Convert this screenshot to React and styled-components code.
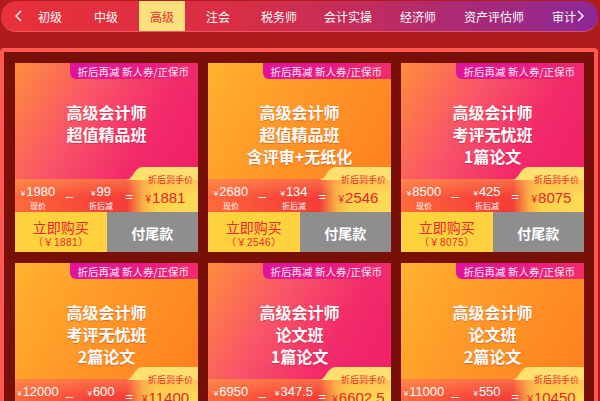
import React from "react";
import styled, { createGlobalStyle, css } from "styled-components";

const GlobalStyle = createGlobalStyle`
  html, body {
    margin: 0;
    padding: 0;
    background: #b01b1e;
    overflow: hidden;
  }
  body {
    font-family: "Noto Sans CJK SC", "Noto Sans", sans-serif;
  }
  * {
    box-sizing: border-box;
  }
`;

const Page = styled.div`
  width: 600px;
  height: 401px;
  padding-top: 1px;
  overflow: hidden;
`;

const Nav = styled.div`
  position: relative;
  display: flex;
  align-items: stretch;
  margin-left: 1px;
  width: 597px;
  height: 31px;
  border-radius: 16px;
  overflow: hidden;
  border-bottom: 1px solid rgba(255, 120, 120, 0.55);
  background: linear-gradient(90deg, #e8313a 0%, #d82e45 40%, #c12c5e 62%, #a42a7c 82%, #8d2798 100%);
`;

const ArrowBox = styled.div`
  display: flex;
  align-items: center;
  width: 26px;
  flex: none;
  padding-left: 14px;
`;

const RightArrow = styled.div`
  position: absolute;
  right: 14px;
  top: 0;
  bottom: 0;
  display: flex;
  align-items: center;
`;

const TabList = styled.div`
  display: flex;
  gap: 10px;
`;

const Tab = styled.div`
  flex: none;
  width: ${(p) => p.$w}px;
  display: flex;
  align-items: center;
  justify-content: center;
  font-size: 12px;
  color: #fff;
  white-space: nowrap;
  ${(p) =>
    p.$active &&
    css`
      background: #fde07b;
      color: #e2302e;
    `}
`;

const Board = styled.div`
  margin-top: 16px;
  width: 598px;
  border: 4px solid #ff5853;
  border-radius: 4px;
  background: #780f08;
  padding: 11px 10px 20px 11px;
`;

const Grid = styled.div`
  display: grid;
  grid-template-columns: repeat(3, 183px);
  column-gap: 10px;
  row-gap: 11px;
`;

const Card = styled.div`
  display: flex;
  flex-direction: column;
`;

const faces = {
  pink: "linear-gradient(120deg, #ff8d3c 0%, #f95468 35%, #f22a6a 65%, #ee1c66 100%)",
  orange: "linear-gradient(120deg, #ffb22f 0%, #ff9627 45%, #ff7c1e 100%)",
};

const Face = styled.div`
  position: relative;
  height: 149px;
  display: flex;
  flex-direction: column;
  background: ${(p) => faces[p.$tone]};
`;

const Tag = styled.div`
  position: absolute;
  top: 0;
  right: 0;
  height: 16px;
  padding: 0 9px 0 8px;
  display: flex;
  align-items: center;
  font-size: 10.5px;
  color: #ffe9f2;
  white-space: nowrap;
  border-bottom-left-radius: 6px;
  background: linear-gradient(90deg, #e0139b 0%, #ea1c80 60%, #f02c6c 100%);
`;

const Title = styled.div`
  padding-top: 38px;
  text-align: center;
  font-size: 16px;
  font-weight: 700;
  line-height: 22px;
  color: #fff;
  text-shadow: 0 1px 1px rgba(150, 20, 20, 0.35);
`;

const PriceArea = styled.div`
  position: relative;
  margin-top: auto;
  padding-top: 12px;
`;

const HandTab = styled.div`
  position: absolute;
  top: 0;
  right: 0;
  width: 72px;
  height: 13px;
  z-index: 1;

  &::before {
    content: "";
    position: absolute;
    inset: 0;
    background: #fee06e;
    clip-path: path("M0 13 C7 13 8 0 17 0 L72 0 L72 13 Z");
  }
`;

const HandText = styled.span`
  position: absolute;
  left: 22px;
  top: 7px;
  font-size: 9px;
  line-height: 11px;
  color: #e8282a;
  white-space: nowrap;
`;

const Band = styled.div`
  height: 33px;
  display: flex;
  background:
    linear-gradient(180deg, rgba(255, 170, 90, 0.45) 0%, rgba(255, 120, 60, 0) 55%),
    linear-gradient(90deg, #ff6a3c 0%, #f8463a 40%, #f43d36 61%, #fbb044 70%, #fed24b 77%, #fedb55 100%);
`;

const Cell = styled.div`
  width: ${(p) => p.$w}px;
  flex: none;
  display: flex;
  flex-direction: column;
  align-items: center;
  padding-top: 6px;
  color: #fff;
  white-space: nowrap;
`;

const Amount = styled.div`
  font-family: "Liberation Sans", "Noto Sans CJK SC", sans-serif;
  font-size: 13px;
  line-height: 14px;
`;

const Yen = styled.span`
  font-size: ${(p) => p.$size || 8}px;
  margin-right: 1px;
`;

const Label = styled.div`
  font-size: 8px;
  line-height: 9px;
`;

const Op = styled.div`
  width: ${(p) => p.$w}px;
  flex: none;
  text-align: center;
  padding-top: 10px;
  color: #fff;
  font-family: "Liberation Sans", sans-serif;
  font-size: 13px;
  line-height: 15px;
`;

const Final = styled.div`
  flex: 1;
  text-align: center;
  padding-top: 10px;
  color: #e8232b;
  font-family: "Liberation Sans", "Noto Sans CJK SC", sans-serif;
  font-size: 15px;
  line-height: 17px;
  white-space: nowrap;
`;

const Actions = styled.div`
  display: grid;
  grid-template-columns: 1fr 1fr;
  height: 40px;
`;

const BuyButton = styled.div`
  display: flex;
  flex-direction: column;
  align-items: center;
  justify-content: center;
  padding-top: 4px;
  background: #ffd23e;
  color: #e8262e;
`;

const BuyText = styled.div`
  font-size: 14px;
  line-height: 17px;
`;

const BuySub = styled.div`
  font-size: 10px;
  line-height: 13px;
  letter-spacing: 0.5px;
  font-family: "Liberation Sans", "Noto Sans CJK SC", sans-serif;
`;

const PayButton = styled.div`
  display: flex;
  align-items: center;
  justify-content: center;
  padding-top: 1px;
  background: #8e8e8e;
  color: #fff;
  font-size: 14px;
  font-weight: 700;
`;

const tabs = [
  { name: "初级", w: 46 },
  { name: "中级", w: 46 },
  { name: "高级", w: 46, active: true },
  { name: "注会", w: 46 },
  { name: "税务师", w: 56 },
  { name: "会计实操", w: 62 },
  { name: "经济师", w: 58 },
  { name: "资产评估师", w: 74 },
  { name: "审计", w: 46 },
];

const cards = [
  { tone: "pink", lines: ["高级会计师", "超值精品班"], price: "1980", cut: "99", final: "1881" },
  { tone: "orange", lines: ["高级会计师", "超值精品班", "含评审+无纸化"], price: "2680", cut: "134", final: "2546" },
  { tone: "pink", lines: ["高级会计师", "考评无忧班", "1篇论文"], price: "8500", cut: "425", final: "8075" },
  { tone: "orange", lines: ["高级会计师", "考评无忧班", "2篇论文"], price: "12000", cut: "600", final: "11400" },
  { tone: "pink", lines: ["高级会计师", "论文班", "1篇论文"], price: "6950", cut: "347.5", final: "6602.5" },
  { tone: "orange", lines: ["高级会计师", "论文班", "2篇论文"], price: "11000", cut: "550", final: "10450" },
];

const Chevron = ({ dir }) => (
  <svg width="7" height="12" viewBox="0 0 7 12">
    <polyline
      points={dir === "left" ? "6,1 1,6 6,11" : "1,1 6,6 1,11"}
      fill="none"
      stroke="#fff"
      strokeWidth="1.4"
    />
  </svg>
);

const CourseCard = ({ card }) => (
  <Card>
    <Face $tone={card.tone}>
      <Tag>折后再减 新人券/正保币</Tag>
      <Title>
        {card.lines.map((l) => (
          <div key={l}>{l}</div>
        ))}
      </Title>
      <PriceArea>
        <HandTab>
          <HandText>折后到手价</HandText>
        </HandTab>
        <Band>
          <Cell $w={46}>
            <Amount>
              <Yen>¥</Yen>
              {card.price}
            </Amount>
            <Label>现价</Label>
          </Cell>
          <Op $w={16}>–</Op>
          <Cell $w={48}>
            <Amount>
              <Yen>¥</Yen>
              {card.cut}
            </Amount>
            <Label>折后减</Label>
          </Cell>
          <Op $w={8}>=</Op>
          <Final>
            <Yen $size={10}>¥</Yen>
            {card.final}
          </Final>
        </Band>
      </PriceArea>
    </Face>
    <Actions>
      <BuyButton>
        <BuyText>立即购买</BuyText>
        <BuySub>（￥{card.final}）</BuySub>
      </BuyButton>
      <PayButton>付尾款</PayButton>
    </Actions>
  </Card>
);

export default function App() {
  return (
    <Page>
      <GlobalStyle />
      <Nav>
        <ArrowBox>
          <Chevron dir="left" />
        </ArrowBox>
        <TabList>
          {tabs.map((t) => (
            <Tab key={t.name} $w={t.w} $active={t.active}>
              {t.name}
            </Tab>
          ))}
        </TabList>
        <RightArrow>
          <Chevron dir="right" />
        </RightArrow>
      </Nav>
      <Board>
        <Grid>
          {cards.map((c, i) => (
            <CourseCard key={i} card={c} />
          ))}
        </Grid>
      </Board>
    </Page>
  );
}
